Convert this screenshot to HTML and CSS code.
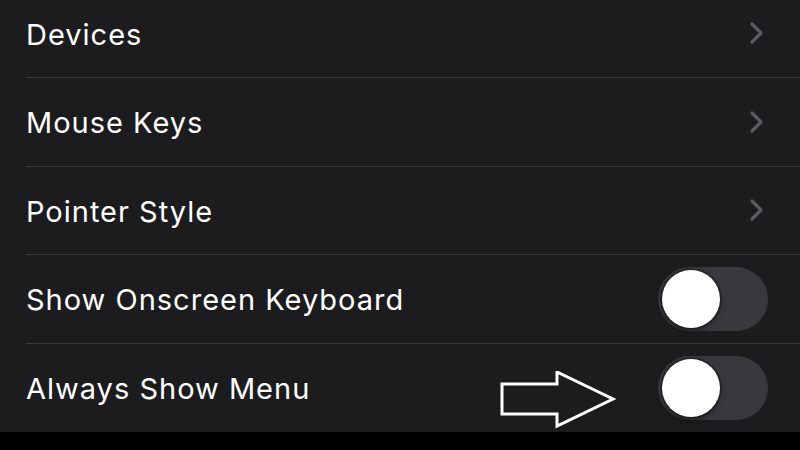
FILE: index.html
```html
<!DOCTYPE html>
<html>
<head>
<meta charset="utf-8">
<link rel="stylesheet" href="styles.css">
</head>
<body>
<div class="screen">
  <ul class="list">
    <li class="row">
      <span class="label">Devices</span>
      <svg class="chev" width="16" height="24" viewBox="0 0 16 24"><path d="M3 3 L12 12 L3 21" fill="none" stroke="#5b5b5f" stroke-width="3.2" stroke-linecap="round" stroke-linejoin="round"/></svg>
    </li>
    <li class="row">
      <span class="label">Mouse Keys</span>
      <svg class="chev" width="16" height="24" viewBox="0 0 16 24"><path d="M3 3 L12 12 L3 21" fill="none" stroke="#5b5b5f" stroke-width="3.2" stroke-linecap="round" stroke-linejoin="round"/></svg>
    </li>
    <li class="row">
      <span class="label">Pointer Style</span>
      <svg class="chev" width="16" height="24" viewBox="0 0 16 24"><path d="M3 3 L12 12 L3 21" fill="none" stroke="#5b5b5f" stroke-width="3.2" stroke-linecap="round" stroke-linejoin="round"/></svg>
    </li>
    <li class="row">
      <span class="label">Show Onscreen Keyboard</span>
      <span class="toggle"><span class="knob"></span></span>
    </li>
    <li class="row last">
      <span class="label">Always Show Menu</span>
      <span class="toggle"><span class="knob"></span></span>
      <svg class="arrow" width="120" height="60" viewBox="0 0 120 60"><polygon points="2,13 57,13 57,1 113,28 57,55 57,43 2,43" fill="#1c1c1e" stroke="#ffffff" stroke-width="3" stroke-linejoin="miter"/></svg>
    </li>
  </ul>
  <div class="footer">When this is on, the menu will be visible at all times on screen.</div>
</div>
</body>
</html>
```
FILE: styles.css
```css
html, body {
  margin: 0;
  padding: 0;
  background: #000;
}
.screen {
  width: 800px;
  height: 450px;
  overflow: hidden;
  background: #000;
  font-family: Inter, "Liberation Sans", sans-serif;
}
.list {
  list-style: none;
  margin: -10.5px 0 0 0;
  padding: 0 0 0 26px;
  background: #1c1c1e;
}
.row {
  position: relative;
  height: 87.5px;
  display: flex;
  align-items: center;
  justify-content: space-between;
  padding-right: 32px;
  border-bottom: 1px solid #38383a;
  box-sizing: content-box;
}
.row.last {
  height: 88.5px;
  border-bottom: none;
}
.label {
  color: #ffffff;
  font-size: 29px;
  letter-spacing: 1px;
  margin-top: 2px;
}
.chev {
  margin-right: 3px;
}
.toggle {
  width: 110px;
  height: 64px;
  border-radius: 32px;
  background: #39393d;
  display: flex;
  align-items: center;
  padding-left: 4px;
  box-sizing: border-box;
  margin-right: 0;
}
.knob {
  width: 58px;
  height: 58px;
  border-radius: 50%;
  background: #fff;
  box-shadow: 0 0 0 2px rgba(0,0,0,0.25), 0 3px 6px rgba(0,0,0,0.35);
}
.arrow {
  position: absolute;
  left: 474px;
  top: 27px;
}
.footer {
  color: #8e8e93;
  font-size: 24px;
  line-height: 30px;
  padding: 15px 0 0 26px;
}
```
